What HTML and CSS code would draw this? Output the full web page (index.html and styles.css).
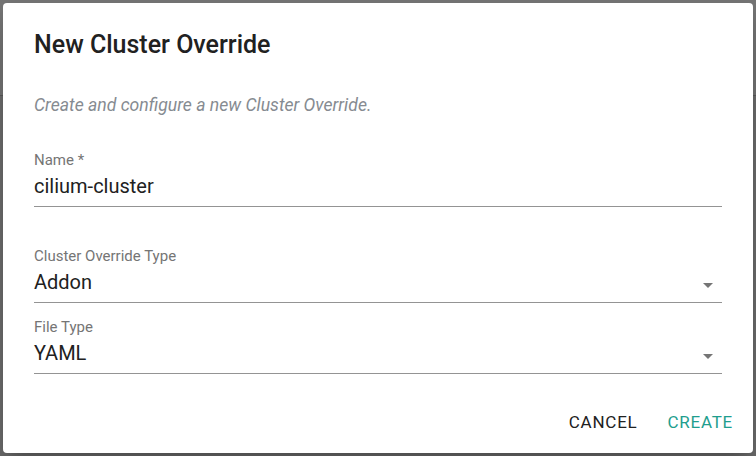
FILE: index.html
```html
<!DOCTYPE html>
<html lang="en">
<head>
  <meta charset="UTF-8">
  <meta name="viewport" content="width=device-width, initial-scale=1.0">
  <title>New Cluster Override</title>
  <link rel="stylesheet" href="styles.css">
</head>
<body>
  <div class="dialog">
    <h2 class="dialog-title">New Cluster Override</h2>
    <p class="dialog-subtitle">Create and configure a new Cluster Override.</p>

    <div class="field field-name">
      <div class="field-label">Name *</div>
      <div class="field-value">cilium-cluster</div>
    </div>

    <div class="field field-type">
      <div class="field-label">Cluster Override Type</div>
      <div class="field-value">
        <span>Addon</span>
        <svg class="arrow" width="10" height="5" viewBox="0 0 10 5"><path d="M0 0h10L5 5z" fill="#757575"/></svg>
      </div>
    </div>

    <div class="field field-file">
      <div class="field-label">File Type</div>
      <div class="field-value">
        <span>YAML</span>
        <svg class="arrow" width="10" height="5" viewBox="0 0 10 5"><path d="M0 0h10L5 5z" fill="#757575"/></svg>
      </div>
    </div>

    <div class="dialog-actions">
      <button class="btn btn-cancel">CANCEL</button>
      <button class="btn btn-create">CREATE</button>
    </div>
  </div>
</body>
</html>
```

FILE: styles.css
```css
/* Page + backdrop */
html, body {
  margin: 0;
  padding: 0;
}

body {
  font-family: Roboto, 'Liberation Sans', sans-serif;
  width: 756px;
  height: 456px;
  overflow: hidden;
  background: linear-gradient(to bottom, #747474 0, #747474 95px, #595959 95px, #595959 96px, #6c6c6c 96px);
  display: flex;
  justify-content: center;
  align-items: center;
}

/* Dialog */
.dialog {
  box-sizing: border-box;
  width: 750px;
  height: 450px;
  background: #fff;
  border-radius: 4px;
  box-shadow: 0 11px 15px -7px rgba(0, 0, 0, 0.2), 0 24px 38px 3px rgba(0, 0, 0, 0.14);
  padding: 28px 31px 13px 31px;
  display: flex;
  flex-direction: column;
}

.dialog-title {
  margin: 0;
  font-size: 25px;
  line-height: 28px;
  font-weight: 500;
  color: #212121;
}

.dialog-subtitle {
  margin: 36px 0 0;
  font-size: 17.6px;
  line-height: 20px;
  font-style: italic;
  color: #868b91;
}

/* Form fields */
.field {
  border-bottom: 1px solid #949494;
}

.field-name {
  margin-top: 36px;
}

.field-type {
  margin-top: 40px;
}

.field-file {
  margin-top: 15px;
}

.field-label {
  font-size: 15px;
  line-height: 18px;
  color: #757575;
}

.field-value {
  margin-top: 5px;
  padding-bottom: 8px;
  font-size: 20px;
  line-height: 24px;
  color: #212121;
  display: flex;
  justify-content: space-between;
  align-items: flex-start;
}

.arrow {
  margin-top: 13px;
  margin-right: 9px;
}

/* Actions */
.dialog-actions {
  margin-top: auto;
  margin-right: -19px;
  display: flex;
  justify-content: flex-end;
  gap: 14px;
}

.btn {
  font-family: inherit;
  font-size: 17px;
  line-height: 36px;
  letter-spacing: 0.75px;
  background: none;
  border: none;
  padding: 0 8px;
  cursor: pointer;
}

.btn-cancel {
  color: #212121;
}

.btn-create {
  color: #1f9e8e;
}
```
